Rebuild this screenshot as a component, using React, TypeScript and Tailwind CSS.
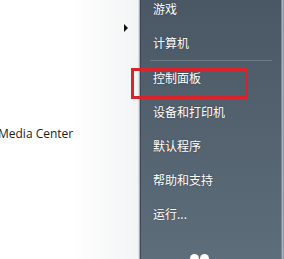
import React from 'react';

const items = ['游戏', '计算机', '控制面板', '设备和打印机', '默认程序', '帮助和支持', '运行...'];

const MenuRow: React.FC<{ label: string }> = ({ label }) => (
  <div className="flex h-[34px] items-center pl-[12px] text-[12px] leading-none text-white [text-shadow:0_0_2px_rgba(0,0,0,0.35)]">
    {label}
  </div>
);

const App: React.FC = () => {
  return (
    <div className="relative flex h-[259px] w-[284px] overflow-hidden bg-white font-['Noto_Sans_CJK_SC','Noto_Sans',sans-serif]">
      <div className="relative h-full w-[138px] bg-gradient-to-r from-white via-white to-[#f3f4f5]">
        <div className="absolute left-[124px] top-[24px] h-0 w-0 border-y-[4px] border-l-[4px] border-y-transparent border-l-[#111]" />
        <div className="absolute left-[-2px] top-[125px] font-['Open_Sans',sans-serif] text-[12px] text-[#1c1c1c]">
          Media Center
        </div>
      </div>
      <div className="flex h-full w-[3px]">
        <div className="w-px bg-[#dfe3e7]" />
        <div className="w-px bg-[#a3adb7]" />
        <div className="w-px bg-[#3c4855]" />
      </div>
      <div className="flex h-full w-[140px] flex-col bg-gradient-to-b from-[#4a5866] to-[#5e6d7a]">
        <div className="-mt-[8px]">
          <MenuRow label={items[0]} />
          <MenuRow label={items[1]} />
        </div>
        <div className="mx-[9px] h-px bg-[#6c7a88]" />
        {items.slice(2).map((label) => (
          <MenuRow key={label} label={label} />
        ))}
        <div className="mt-auto ml-[49px] flex gap-px">
          <div className="-mb-[4px] h-[9px] w-[9px] rounded-full bg-white" />
          <div className="-mb-[4px] h-[9px] w-[9px] rounded-full bg-white" />
        </div>
      </div>
      <div className="flex h-full w-[3px]">
        <div className="w-px bg-[#7c8996]" />
        <div className="w-px bg-[#aab4be]" />
        <div className="w-px bg-[#8d98a3]" />
      </div>
      <div className="absolute left-[131px] top-[68px] h-[31px] w-[117px] border-[3px] border-[#d9232a]" />
    </div>
  );
};

export default App;
